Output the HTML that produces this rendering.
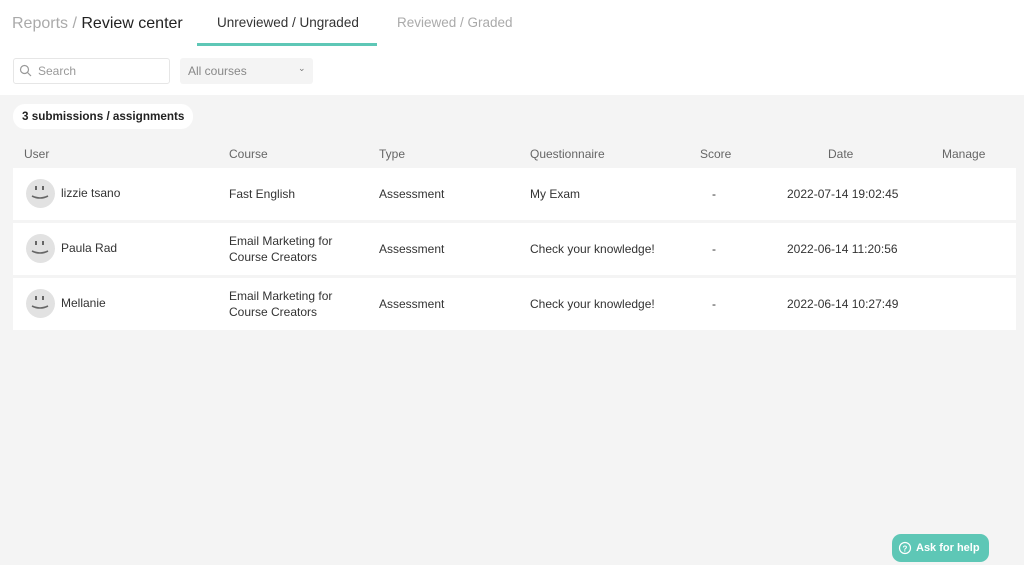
<!DOCTYPE html>
<html><head><meta charset="utf-8"><style>
*{box-sizing:border-box;margin:0;padding:0}
body{width:1024px;height:565px;overflow:hidden;background:#f4f4f4;font-family:"Liberation Sans",sans-serif;color:#333;position:relative}
.hdr{position:absolute;left:0;top:0;width:1024px;height:46px;background:#fff;box-shadow:0 1px 3px rgba(0,0,0,.06)}
.tb{position:absolute;left:0;top:46px;width:1024px;height:49px;background:#fff}
.abs{position:absolute;white-space:nowrap}
.row{position:absolute;left:13px;width:1003px;height:52px;background:#fff}
.th{position:absolute;top:147px;font-size:12px;color:#666}
.c{position:absolute;font-size:12px;color:#333;line-height:16px}
.av{position:absolute;left:13px;width:29px;height:29px;border-radius:50%;background:#e2e2e2}
</style></head><body>
<div class="hdr">
 <div class="abs" style="left:12px;top:15px;font-size:16px;color:#aaa">Reports / <span style="color:#222">Review center</span></div>
 <div class="abs" style="left:217px;top:15px;font-size:13.5px;color:#333">Unreviewed / Ungraded</div>
 <div class="abs" style="left:397px;top:15px;font-size:13.5px;color:#aaa">Reviewed / Graded</div>
 <div class="abs" style="left:197px;top:43px;width:180px;height:3px;background:#5ec7b6"></div>
</div>
<div class="tb">
 <div class="abs" style="left:13px;top:12px;width:157px;height:26px;border:1px solid #e6e6e6;border-radius:3px"></div>
 <svg class="abs" style="left:19px;top:18px" width="13" height="13" viewBox="0 0 13 13"><circle cx="5.5" cy="5.5" r="4" fill="none" stroke="#999" stroke-width="1.2"/><path d="M8.5 8.5L12 12" stroke="#999" stroke-width="1.2"/></svg>
 <div class="abs" style="left:38px;top:18px;font-size:12px;color:#999">Search</div>
 <div class="abs" style="left:180px;top:12px;width:133px;height:26px;background:#f4f4f4;border-radius:3px"></div>
 <div class="abs" style="left:188px;top:18px;font-size:12px;color:#888">All courses</div>
 <div class="abs" style="left:298px;top:17px;font-size:9px;color:#777">&#8964;</div>
</div>
<div class="abs" style="left:13px;top:104px;height:25px;padding:0 9px;background:#fff;border-radius:12px;font-size:11.7px;font-weight:bold;line-height:25px;color:#222">3 submissions / assignments</div>
<div class="th" style="left:24px">User</div><div class="th" style="left:229px">Course</div><div class="th" style="left:379px">Type</div><div class="th" style="left:530px">Questionnaire</div><div class="th" style="left:700px">Score</div><div class="th" style="left:828px">Date</div><div class="th" style="left:942px">Manage</div>

<div class="row" style="top:168px"><div class="av" style="top:11px"></div></div>
<div class="row" style="top:223px"><div class="av" style="top:11px"></div></div>
<div class="row" style="top:278px"><div class="av" style="top:11px"></div></div>
<svg class="abs" style="left:0;top:0" width="60" height="330"><g fill="none" stroke="#666" stroke-width="1.6"><path d="M32 196q8 4 16 0"/><path d="M32 251q8 4 16 0"/><path d="M32 306q8 4 16 0"/></g><g fill="#666"><rect x="35" y="186" width="2" height="4"/><rect x="42" y="186" width="2" height="4"/><rect x="35" y="241" width="2" height="4"/><rect x="42" y="241" width="2" height="4"/><rect x="35" y="296" width="2" height="4"/><rect x="42" y="296" width="2" height="4"/></g></svg>

<div class="c" style="left:61px;top:185px">lizzie tsano</div>
<div class="c" style="left:229px;top:186px">Fast English</div>
<div class="c" style="left:379px;top:186px">Assessment</div>
<div class="c" style="left:530px;top:186px">My Exam</div>
<div class="c" style="left:712px;top:186px">-</div>
<div class="c" style="left:787px;top:186px">2022-07-14 19:02:45</div>

<div class="c" style="left:61px;top:240px">Paula Rad</div>
<div class="c" style="left:229px;top:233px">Email Marketing for<br>Course Creators</div>
<div class="c" style="left:379px;top:241px">Assessment</div>
<div class="c" style="left:530px;top:241px">Check your knowledge!</div>
<div class="c" style="left:712px;top:241px">-</div>
<div class="c" style="left:787px;top:241px">2022-06-14 11:20:56</div>

<div class="c" style="left:61px;top:295px">Mellanie</div>
<div class="c" style="left:229px;top:288px">Email Marketing for<br>Course Creators</div>
<div class="c" style="left:379px;top:296px">Assessment</div>
<div class="c" style="left:530px;top:296px">Check your knowledge!</div>
<div class="c" style="left:712px;top:296px">-</div>
<div class="c" style="left:787px;top:296px">2022-06-14 10:27:49</div>

<div class="abs" style="left:892px;top:534px;width:97px;height:28px;background:#5ec7b6;border-radius:9px;color:#fff;font-size:11px;font-weight:bold;line-height:28px;padding-left:24px">Ask for help</div>
<svg class="abs" style="left:898px;top:541px" width="14" height="14"><circle cx="7" cy="7" r="5.5" fill="none" stroke="#fff" stroke-width="1.2"/><text x="7" y="10.5" font-size="8" font-family="Liberation Sans" fill="#fff" text-anchor="middle" font-weight="bold">?</text></svg>
</body></html>
